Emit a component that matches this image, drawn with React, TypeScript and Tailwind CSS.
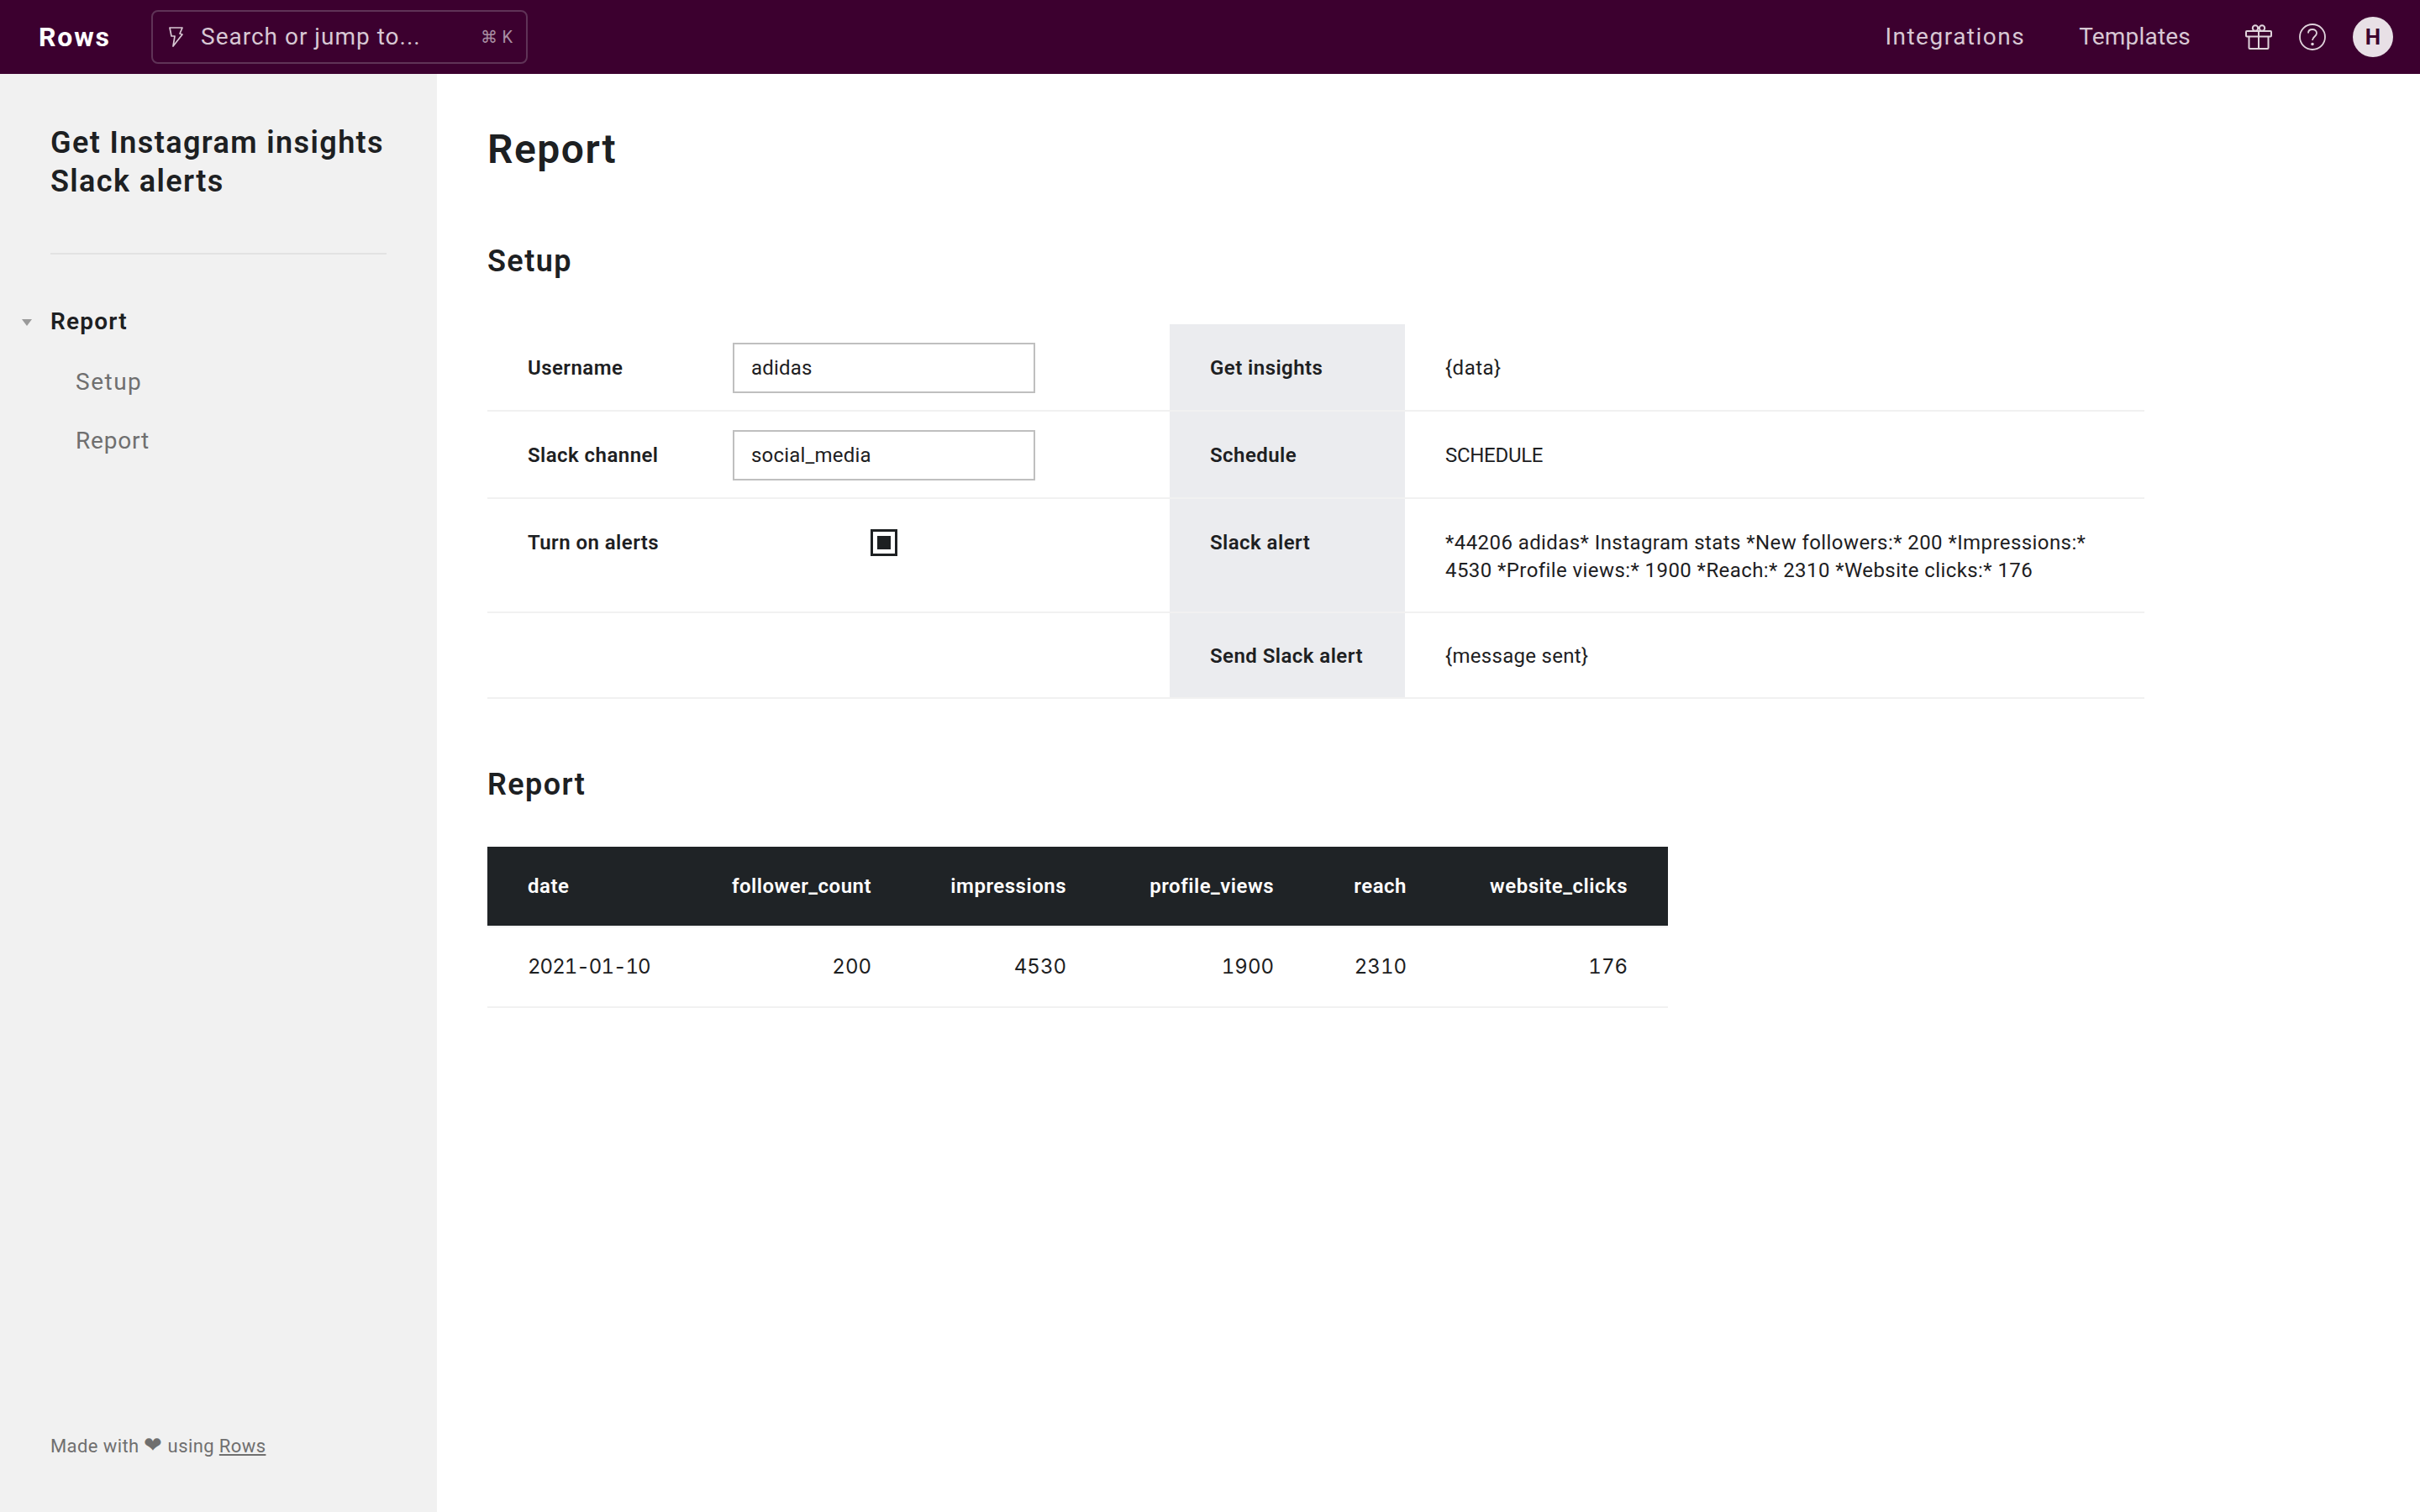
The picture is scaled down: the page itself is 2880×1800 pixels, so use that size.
import React from 'react';

const font = "font-['Roboto','Liberation_Sans',sans-serif]";

const BoltIcon = () => (
  <svg width="20" height="26" viewBox="0 0 20 26" fill="none" stroke="#d8c8d4" strokeWidth="1.7" strokeLinejoin="round">
    <path d="M2 2h15l-3 7 3 1L6 24l2-12H4z" />
  </svg>
);

const GiftIcon = () => (
  <svg width="32" height="32" viewBox="0 0 32 32" fill="none" stroke="#e0d3dc" strokeWidth="2" strokeLinejoin="round">
    <rect x="1" y="9" width="30" height="6.500" rx="1" />
    <path d="M4.500 15.500V29a1 1 0 0 0 1 1h21a1 1 0 0 0 1-1V15.500M16 9v21" />
    <circle cx="12" cy="5.500" r="3.200" />
    <circle cx="20" cy="5.500" r="3.200" />
  </svg>
);

const HelpIcon = () => (
  <svg width="32" height="32" viewBox="0 0 32 32" fill="none" stroke="#e0d3dc" strokeWidth="1.8">
    <circle cx="16" cy="16" r="15" />
    <path d="M11 11.500C11 8.500 13.200 7 16 7s5 1.800 5 4.500c0 4-5 4-5 8.500" />
    <circle cx="16" cy="24.500" r="0.900" fill="#e0d3dc" />
  </svg>
);

const rows = [
  { label: 'Username', input: 'adidas', name: 'Get insights', val: '{data}' },
  { label: 'Slack channel', input: 'social_media', name: 'Schedule', val: 'SCHEDULE' },
];

const cols = ['date', 'follower_count', 'impressions', 'profile_views', 'reach', 'website_clicks'];
const vals = ['2021-01-10', '200', '4530', '1900', '2310', '176'];

export default function App() {
  return (
    <div className={`${font} h-[1800px] w-[2880px] flex flex-col overflow-hidden bg-white text-[#1d2022]`}>
      <header className="h-[88px] shrink-0 bg-[#3c002f] flex items-center pl-[46px] pr-8">
        <span className="w-[134px] text-[32px] font-bold text-white tracking-[1.8px]">Rows</span>
        <div className="w-[448px] h-[64px] rounded-lg border-2 border-[#5f3357] flex items-center pl-[18px] pr-4">
          <BoltIcon />
          <span className="ml-[19px] text-[28px] tracking-[1px] text-[#d8c8d4]">Search or jump to...</span>
          <span className="ml-auto text-xl text-[#a98fa3]">⌘ K</span>
        </div>
        <div className="ml-auto flex items-center">
          <span className="text-[28px] tracking-[1.5px] text-[#d8c8d4]">Integrations</span>
          <span className="ml-[64px] text-[28px] tracking-[0.2px] text-[#d8c8d4]">Templates</span>
          <span className="ml-[65px] flex"><GiftIcon /></span>
          <span className="ml-8 flex"><HelpIcon /></span>
          <span className="ml-8 w-12 h-12 rounded-full bg-[#e8e0e6] flex items-center justify-center text-[26px] font-bold text-[#3c002f]">H</span>
        </div>
      </header>
      <div className="flex flex-1 min-h-0">
        <aside className="w-[520px] shrink-0 bg-[#f1f1f1] flex flex-col pl-[60px] pt-[59px] pb-[62px]">
          <h1 className="w-[440px] text-[36px] leading-[46px] font-semibold tracking-[1.4px]">Get Instagram insights Slack alerts</h1>
          <div className="mt-[62px] w-[400px] h-0.5 bg-[#e2e2e2]" />
          <div className="relative mt-[62px] text-[28px] leading-9 font-semibold tracking-[1.2px]">
            <span className="absolute left-[-34px] top-[15px] w-0 h-0 border-x-[6px] border-x-transparent border-t-[8px] border-t-[#9a9a9a]" />
            Report
          </div>
          <div className="mt-[36px] ml-[30px] text-[28px] leading-9 tracking-[1.5px] text-[#6f6f6f]">Setup</div>
          <div className="mt-[34px] ml-[30px] text-[28px] leading-9 tracking-[0.8px] text-[#6f6f6f]">Report</div>
          <div className="mt-auto text-[22px] leading-8 tracking-[0.4px] text-[#6f6f6f]">
            Made with <span className="text-[26px] leading-none">❤</span> using <span className="underline">Rows</span>
          </div>
        </aside>
        <main className="flex-1 pl-[60px]">
          <h1 className="mt-[60px] text-[48px] leading-[60px] font-semibold tracking-[1.5px]">Report</h1>
          <h2 className="mt-[80px] text-[36px] leading-[46px] font-semibold tracking-[1.4px]">Setup</h2>
          <div className="mt-[52px] w-[1972px]">
            {rows.map(r => (
              <div key={r.label} className="grid grid-cols-[812px_280px_880px] h-[104px] border-b-2 border-[#f1f1f1]">
                <div className="flex items-center pl-12 pt-0.5">
                  <div className="w-[244px] text-2xl font-semibold tracking-[0.45px]">{r.label}</div>
                  <div className="w-[360px] h-[60px] border-2 border-[#bfbfbf] flex items-center pl-5 text-2xl tracking-[0.2px]">{r.input}</div>
                </div>
                <div className="bg-[#ebecef] pl-12 pt-0.5 flex items-center text-2xl font-semibold tracking-[0.45px]">{r.name}</div>
                <div className={`pl-12 pt-0.5 flex items-center text-2xl ${r.val === 'SCHEDULE' ? 'tracking-[-0.3px]' : 'tracking-[0.5px]'}`}>{r.val}</div>
              </div>
            ))}
            <div className="grid grid-cols-[812px_280px_880px] h-[136px] border-b-2 border-[#f1f1f1]">
              <div className="flex items-start pl-12 pt-9">
                <div className="w-[408px] text-2xl leading-8 font-semibold tracking-[0.45px]">Turn on alerts</div>
                <div className="w-8 h-8 border-[3px] border-[#1d2022] flex items-center justify-center">
                  <div className="w-4 h-4 bg-[#1d2022]" />
                </div>
              </div>
              <div className="bg-[#ebecef] pl-12 pt-9 text-2xl leading-8 font-semibold tracking-[0.45px]">Slack alert</div>
              <div className="pl-12 pr-12 pt-9 text-2xl leading-[33px] tracking-[0.42px]">
                *44206 adidas* Instagram stats *New followers:* 200 *Impressions:* 4530 *Profile views:* 1900 *Reach:* 2310 *Website clicks:* 176
              </div>
            </div>
            <div className="grid grid-cols-[812px_280px_880px] h-[102px] border-b-2 border-[#f1f1f1]">
              <div />
              <div className="bg-[#ebecef] pl-12 pt-0.5 flex items-center text-2xl font-semibold tracking-[0.45px]">Send Slack alert</div>
              <div className="pl-12 pt-0.5 flex items-center text-2xl tracking-[0.3px]">{'{message sent}'}</div>
            </div>
          </div>
          <h2 className="mt-[79px] text-[36px] leading-[46px] font-semibold tracking-[1.4px]">Report</h2>
          <div className="mt-[51px] w-[1405px]">
            <div className="grid grid-cols-[240px_265px_232px_247px_158px_263px] h-[96px] items-center bg-[#1f2326] border-b-2 border-[#f1f1f1] text-2xl font-semibold tracking-[0.5px] text-white">
              {cols.map((c, i) => (
                <div key={c} className={i === 0 ? 'pl-12' : 'pr-12 text-right'}>{c}</div>
              ))}
            </div>
            <div className="grid grid-cols-[240px_265px_232px_247px_158px_263px] h-[96px] items-center border-b-2 border-[#f1f1f1] font-['Inter',sans-serif] text-2xl tabular-nums">
              {vals.map((v, i) => (
                <div key={i} className={i === 0 ? 'pl-12 tracking-[-1px]' : 'pr-12 text-right'}>{v}</div>
              ))}
            </div>
          </div>
        </main>
      </div>
    </div>
  );
}
